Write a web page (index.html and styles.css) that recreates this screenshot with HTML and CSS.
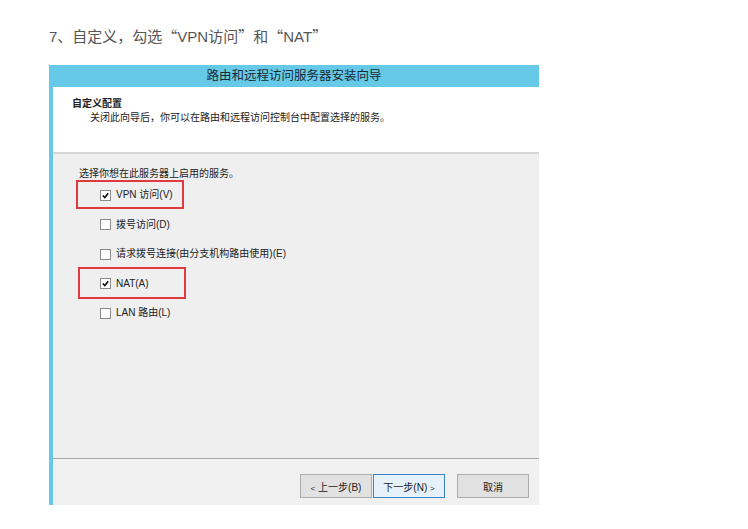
FILE: index.html
```html
<!DOCTYPE html>
<html lang="zh-CN">
<head>
    <meta charset="UTF-8" />
    <title>自定义配置</title>
    <link rel="stylesheet" href="styles.css">
</head>
<body>
    <div class="article">
        <p class="step">7、自定义，勾选<span class="q">“</span>VPN访问<span class="q">”</span>和<span class="q">“</span>NAT<span class="q">”</span></p>

        <div class="wizard">
            <div class="wizard-title">路由和远程访问服务器安装向导</div>

            <div class="wizard-head">
                <div class="head-title">自定义配置</div>
                <div class="head-desc">关闭此向导后，你可以在路由和远程访问控制台中配置选择的服务。</div>
            </div>

            <div class="wizard-body">
                <div class="prompt">选择你想在此服务器上启用的服务。</div>
                <ul class="options">
                    <li><span class="box checked"><svg viewBox="0 0 10 10"><path d="M2 5 L4.2 7.3 L8 2.6" /></svg></span>VPN 访问(V)</li>
                    <li><span class="box"></span>拨号访问(D)</li>
                    <li><span class="box"></span>请求拨号连接(由分支机构路由使用)(E)</li>
                    <li><span class="box checked"><svg viewBox="0 0 10 10"><path d="M2 5 L4.2 7.3 L8 2.6" /></svg></span>NAT(A)</li>
                    <li><span class="box"></span>LAN 路由(L)</li>
                </ul>
                <div class="mark mark-vpn"></div>
                <div class="mark mark-nat"></div>
            </div>

            <div class="wizard-foot">
                <button class="btn"><span class="arrow">&lt;</span> 上一步(B)</button>
                <button class="btn btn-default">下一步(N) <span class="arrow">&gt;</span></button>
                <button class="btn btn-cancel">取消</button>
            </div>
        </div>
    </div>
</body>
</html>
```

FILE: styles.css
```css
body {
    margin: 0;
    background-color: #fff;
    font-family: "Liberation Sans", "Noto Sans CJK SC", sans-serif;
}

.article {
    padding-left: 49px;
}

.step {
    margin: 0;
    padding-top: 26px;
    height: 20px;
    line-height: 20px;
    font-size: 15px;
    color: #555;
}

.step .q {
    font-family: "Noto Sans CJK SC", sans-serif;
}

.wizard {
    margin-top: 19px;
    width: 486px;
    height: 440px;
    border-left: 4px solid #66c9e8;
    display: flex;
    flex-direction: column;
    font-size: 10px;
    color: #222;
}

.wizard-title {
    height: 22px;
    line-height: 22px;
    margin-left: -4px;
    background-color: #66c9e8;
    text-align: center;
    font-size: 12.5px;
    color: #1c2a33;
}

.wizard-head {
    height: 65px;
    flex-shrink: 0;
    background-color: #fff;
    border-bottom: 2px solid #d6d6d6;
    padding-left: 19px;
}

.head-title {
    margin-top: 10px;
    height: 14px;
    line-height: 14px;
    font-weight: bold;
}

.head-desc {
    padding-left: 18px;
    height: 14px;
    line-height: 14px;
}

.wizard-body {
    position: relative;
    flex: 1;
    background-color: #efefef;
    border-bottom: 1px solid #a9a9a9;
    padding: 13px 0 0 26px;
}

.prompt {
    height: 14px;
    line-height: 14px;
}

.options {
    list-style: none;
    margin: 6px 0 0 21px;
    padding: 0;
    display: flex;
    flex-direction: column;
    gap: 13.5px;
}

.options li {
    display: flex;
    align-items: center;
    gap: 5px;
    height: 16px;
    line-height: 16px;
}

.box {
    width: 9px;
    height: 9px;
    border: 1px solid #8a8a8a;
    background-color: #fff;
    display: flex;
}

.box svg {
    width: 9px;
    height: 9px;
    fill: none;
    stroke: #111;
    stroke-width: 1.8;
}

.mark {
    position: absolute;
    border: 2px solid #e0393e;
    width: 104px;
}

.mark-vpn {
    left: 23px;
    top: 26px;
    height: 25px;
}

.mark-nat {
    left: 25px;
    top: 113px;
    height: 28px;
}

.wizard-foot {
    height: 46px;
    flex-shrink: 0;
    background-color: #f0f0f0;
    display: flex;
    align-items: flex-start;
    justify-content: flex-end;
    padding: 15px 10px 0 0;
    box-sizing: border-box;
}

.btn {
    height: 24px;
    width: 72px;
    margin: 0;
    padding: 0;
    border: 1px solid #adadad;
    background-color: #e1e1e1;
    font-family: "Liberation Sans", "Noto Sans CJK SC", sans-serif;
    font-size: 10px;
    color: #222;
}

.btn-default {
    margin-left: 1px;
    border-color: #3a83c4;
    background-color: #e5f1fb;
}

.btn-cancel {
    margin-left: 12px;
}

.arrow {
    font-size: 8px;
}
```
